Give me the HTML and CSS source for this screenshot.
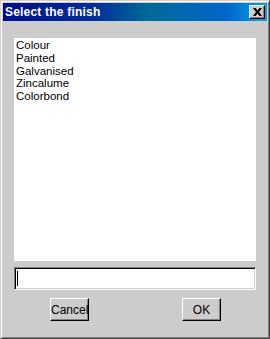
FILE: index.html
```html
<!DOCTYPE html>
<html lang="en">
<head>
<meta charset="UTF-8">
<title>Select the finish</title>
<link rel="stylesheet" href="styles.css">
</head>
<body>

<div class="window">
    <div class="titlebar">
        <span class="title">Select the finish</span>
        <button class="close" type="button">
            <svg width="9" height="8" viewBox="0 0 9 8"><path d="M0 0h2.5l2 2.4 2-2.4H9L6 4l3 4H6.5l-2-2.4-2 2.4H0l3-4z" fill="#000"/></svg>
        </button>
    </div>
    <div class="content">
        <ul class="list">
            <li>Colour</li>
            <li>Painted</li>
            <li>Galvanised</li>
            <li>Zincalume</li>
            <li>Colorbond</li>
        </ul>
        <div class="entry"><span class="caret"></span></div>
        <div class="buttons">
            <button type="button" class="btn">Cancel</button>
            <button type="button" class="btn">OK</button>
        </div>
    </div>
</div>

</body>
</html>
```

FILE: styles.css
```css
/* Classic dialog look */
body {
    margin: 0;
    font-family: "Liberation Sans", Arial, sans-serif;
    font-size: 11px;
}
.window {
    width: 270px;
    height: 339px;
    box-sizing: border-box;
    background: #cccccc;
    border: 1px solid;
    border-color: #d4d0c8 #404040 #404040 #d4d0c8;
    box-shadow: inset 1px 1px #ffffff, inset -1px -1px #808080;
    padding: 2px;
    display: flex;
    flex-direction: column;
}
.titlebar {
    height: 18px;
    display: flex;
    align-items: center;
    justify-content: space-between;
    padding: 0 2px 0 2px;
    background: linear-gradient(to right, #000e88 0%, #00309a 35%, #006a98 55%, #0066cc 85%, #00aadd 100%);
}
.title {
    color: #ffffff;
    font-weight: bold;
    font-size: 12px;
    letter-spacing: 0.2px;
}
.close {
    width: 16px;
    height: 14px;
    padding: 0;
    background: #cccccc;
    border: 1px solid;
    border-color: #ffffff #000000 #000000 #ffffff;
    box-shadow: inset -1px -1px #808080;
    display: flex;
    align-items: center;
    justify-content: center;
}
.content {
    flex: 1;
    padding: 17px 0 0 11px;
}
.list {
    list-style: none;
    margin: 0;
    width: 242px;
    height: 223px;
    box-sizing: border-box;
    padding: 1px 2px;
    background: #ffffff;
    font-size: 11.5px;
}
.list li {
    line-height: 12.75px;
}
.entry {
    margin-top: 6px;
    width: 242px;
    height: 23px;
    box-sizing: border-box;
    background: #ffffff;
    border: 1px solid;
    border-color: #808080 #ffffff #ffffff #808080;
    box-shadow: inset 1px 1px #000000, inset -1px -1px #d4d0c8;
    padding: 3px 0 0 2px;
}
.caret {
    display: block;
    width: 1px;
    height: 15px;
    background: #000000;
}
.buttons {
    margin-top: 8px;
    display: flex;
    gap: 93px;
    padding-left: 36px;
}
.btn {
    width: 39px;
    height: 23px;
    padding: 0;
    background: #cccccc;
    border: 1px solid;
    border-color: #ffffff #000000 #000000 #ffffff;
    box-shadow: inset -1px -1px #808080;
    font-family: "Liberation Sans", Arial, sans-serif;
    font-size: 12px;
    color: #000000;
}
```
